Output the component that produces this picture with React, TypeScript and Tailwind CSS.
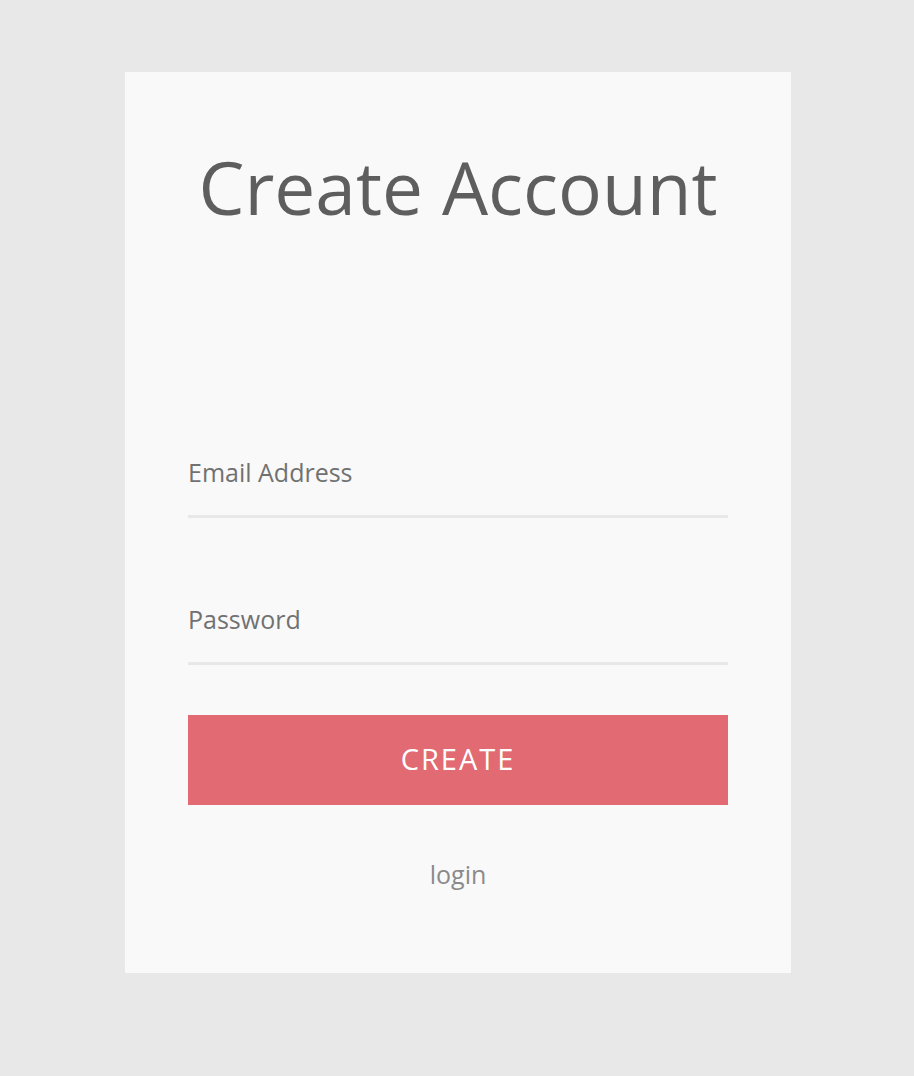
import React from "react";

export default function App() {
  return (
    <div
      className="min-h-screen w-full bg-[#e8e8e8] pt-[72px]"
      style={{ fontFamily: '"Open Sans", "Noto Sans", sans-serif' }}
    >
      <div className="ml-[125px] w-[666px] bg-[#f9f9f9] px-[63px] pt-[78px] pb-[86px]">
        <h1 className="text-center text-[73px] leading-[73px] font-normal text-[#5e5e5e]">
          Create Account
        </h1>

        <div className="mt-[237px] border-b-[3px] border-[#e8e8e8] pb-[30px]">
          <div className="text-[25px] leading-[25px] text-[#717171]">Email Address</div>
        </div>

        <div className="mt-[89px] border-b-[3px] border-[#e8e8e8] pb-[30px]">
          <div className="text-[25px] leading-[25px] text-[#717171]">Password</div>
        </div>

        <button className="mt-[50px] flex h-[90px] w-full items-center justify-center bg-[#e16a73] pb-[3px] text-[29px] leading-[29px] tracking-[2px] text-white">
          CREATE
        </button>

        <div className="mt-[57px] text-center text-[25px] leading-[25px] text-[#8a8a8a]">
          login
        </div>
      </div>
    </div>
  );
}
